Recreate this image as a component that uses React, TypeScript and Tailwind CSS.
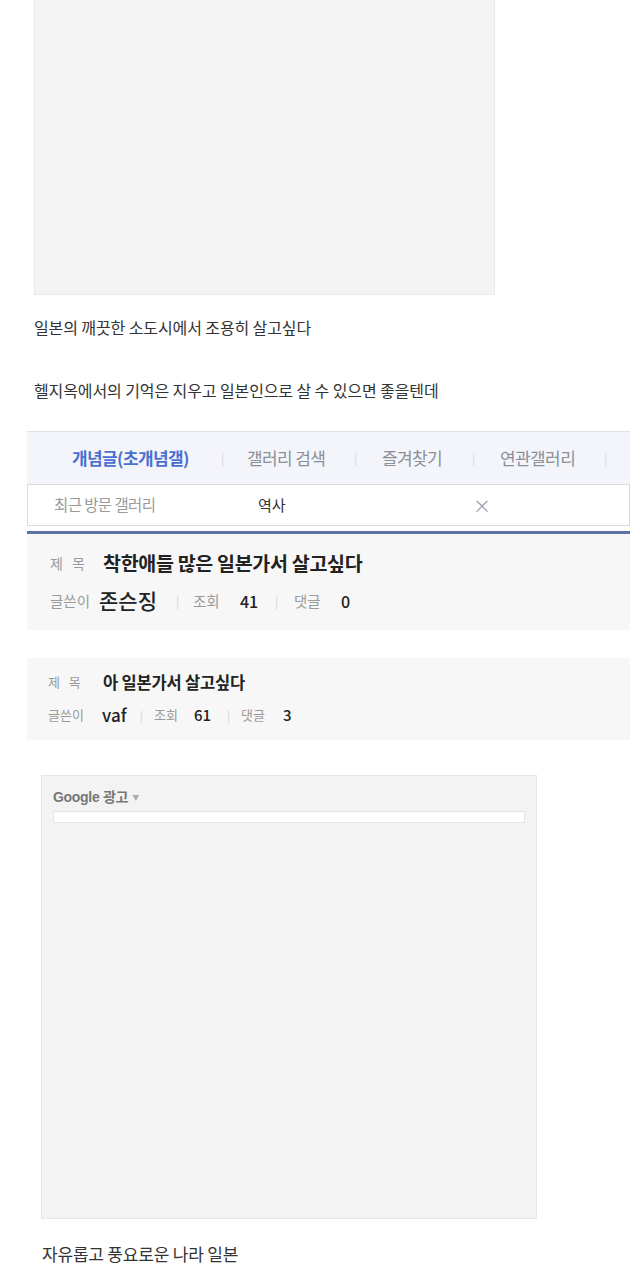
import React from 'react';

const font = { fontFamily: '"Noto Sans CJK KR", "Noto Sans", sans-serif' };

export default function App() {
    return (
        <div className="w-[640px] h-[1280px] bg-white overflow-hidden flex flex-col" style={font}>
            {/* placeholder image */}
            <div className="ml-[34px] w-[461px] h-[295px] bg-[#f4f4f4] border border-t-0 border-[#e9e9e9]"></div>

            <p className="ml-[34px] mt-[22px] text-[16px] leading-[20px] text-[#333] tracking-[-0.1px]">일본의 깨끗한 소도시에서 조용히 살고싶다</p>
            <p className="ml-[34px] mt-[43px] text-[16px] leading-[20px] text-[#333] tracking-[-0.1px]">헬지옥에서의 기억은 지우고 일본인으로 살 수 있으면 좋을텐데</p>

            {/* gallery nav */}
            <div className="ml-[27px] mt-[31px] w-[603px] flex flex-col">
                <div className="h-[53px] bg-[#f3f5fa] border-t border-[#dfe3ec] flex items-center pl-[45px] text-[17px] tracking-[-0.6px]">
                    <span className="font-bold text-[#4a6fd0] w-[125px] whitespace-nowrap">개념글(초개념갤)</span>
                    <span className="ml-[24px] w-[26px] text-[12px] text-[#d0d4dc]">|</span>
                    <span className="text-[#8a8f99] w-[107px]">갤러리 검색</span>
                    <span className="w-[28px] text-[12px] text-[#d0d4dc]">|</span>
                    <span className="text-[#8a8f99] w-[90px]">즐겨찾기</span>
                    <span className="w-[28px] text-[12px] text-[#d0d4dc]">|</span>
                    <span className="text-[#8a8f99] w-[104px]">연관갤러리</span>
                    <span className="text-[12px] text-[#d0d4dc]">|</span>
                </div>
                <div className="h-[42px] bg-white border border-[#d8dbe0] flex items-center">
                    <span className="ml-[26px] w-[204px] text-[15.5px] text-[#9a9a9a] tracking-[-0.6px]">최근 방문 갤러리</span>
                    <span className="text-[15px] text-[#333] w-[215px]">역사</span>
                    <span className="text-[#9aa0b8] text-[18px] leading-none">×</span>
                </div>
                <div className="mt-[5px] h-[3px] bg-[#5b74a8]"></div>
            </div>

            {/* post 1 */}
            <div className="ml-[27px] w-[603px] h-[96px] bg-[#f7f7f7] flex flex-col pt-[16px] pl-[23px] gap-[12px]">
                <div className="flex items-center h-[26px]">
                    <span className="text-[14px] text-[#9a9a9a] tracking-[3px] w-[53px]">제 목</span>
                    <span className="font-bold text-[#222] text-[19.5px] tracking-[-0.3px]">착한애들 많은 일본가서 살고싶다</span>
                </div>
                <div className="flex items-center h-[26px] text-[#222]">
                    <span className="text-[14.5px] text-[#9a9a9a] w-[49px]">글쓴이</span>
                    <span className="text-[21px] font-medium w-[77px]">존슨징</span>
                    <span className="text-[12px] text-[#d0d0d0] w-[17px]">|</span>
                    <span className="text-[14.5px] text-[#9a9a9a] w-[47px]">조회</span>
                    <span className="text-[16px] font-medium w-[35px]">41</span>
                    <span className="text-[12px] text-[#d0d0d0] w-[19px]">|</span>
                    <span className="text-[14.5px] text-[#9a9a9a] w-[47px]">댓글</span>
                    <span className="text-[16px] font-medium">0</span>
                </div>
            </div>

            {/* post 2 */}
            <div className="ml-[27px] mt-[28px] w-[603px] h-[82px] bg-[#f7f7f7] flex flex-col pt-[12px] pl-[21px] gap-[10px]">
                <div className="flex items-center h-[24px]">
                    <span className="text-[13px] text-[#9a9a9a] tracking-[3px] w-[55px]">제 목</span>
                    <span className="font-bold text-[#222] text-[16.5px] tracking-[-0.2px]">아 일본가서 살고싶다</span>
                </div>
                <div className="flex items-center h-[22px] text-[#222]">
                    <span className="text-[13px] text-[#9a9a9a] w-[54px]">글쓴이</span>
                    <span className="text-[17px] font-medium w-[38px]">vaf</span>
                    <span className="text-[11px] text-[#d0d0d0] w-[14px]">|</span>
                    <span className="text-[13px] text-[#9a9a9a] w-[40px]">조회</span>
                    <span className="text-[15px] font-medium w-[33px]">61</span>
                    <span className="text-[11px] text-[#d0d0d0] w-[14px]">|</span>
                    <span className="text-[13px] text-[#9a9a9a] w-[42px]">댓글</span>
                    <span className="text-[15px] font-medium">3</span>
                </div>
            </div>

            {/* ad block */}
            <div className="ml-[41px] mt-[35px] w-[496px] h-[444px] bg-[#f3f3f3] border border-[#e6e6e6] flex flex-col px-[11px] pt-[12px]">
                <div className="flex items-center h-[18px] text-[14px] font-bold text-[#777] tracking-[-0.3px]">
                    <span style={{ fontFamily: '"Liberation Sans", "Noto Sans CJK KR", sans-serif' }}>Google 광고</span>
                    <span className="ml-[4px] text-[7px] text-[#aaa]">▼</span>
                </div>
                <div className="mt-[5px] h-[12px] w-[472px] bg-white border border-[#e4e4e4]"></div>
            </div>

            <p className="ml-[42px] mt-[25px] text-[17px] leading-[20px] text-[#333] tracking-[-0.2px]">자유롭고 풍요로운 나라 일본</p>
        </div>
    );
}
